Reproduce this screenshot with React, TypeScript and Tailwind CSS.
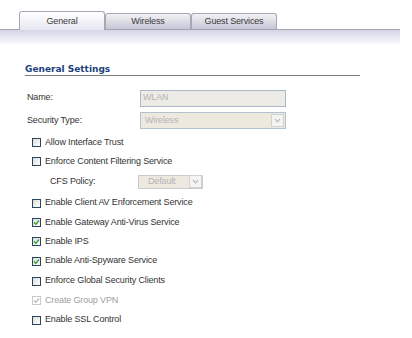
import React from "react";

const font = "font-['Liberation_Sans',Arial,sans-serif] text-[9px] tracking-[-0.15px]";

const Tab = ({ label, active }: { label: string; active?: boolean }) => (
  <div
    className={
      active
        ? "w-[86px] h-[19px] -mb-px pt-[1px] rounded-t-[3px] border border-b-0 border-[#a8a8b4] bg-gradient-to-b from-white to-[#e6e7f1] flex items-center justify-center text-[#3a3a3a]"
        : "w-[86px] h-[16px] pt-[1px] rounded-t-[3px] border border-b-0 border-[#a8a8b4] bg-gradient-to-b from-[#f2f2f4] to-[#c6c7d6] flex items-center justify-center text-[#3a3a3a]"
    }
  >
    {label}
  </div>
);

const Check = ({ checked, disabled }: { checked?: boolean; disabled?: boolean }) => (
  <div
    className={
      disabled
        ? "w-[9px] h-[9px] border border-[#c8c8c8] bg-white flex items-center justify-center"
        : "w-[9px] h-[9px] border border-[#2b4560] bg-gradient-to-br from-[#dcdcd6] to-white flex items-center justify-center"
    }
  >
    {checked && (
      <svg width="7" height="7" viewBox="0 0 7 7">
        <path
          d="M1 3.5 L2.8 5.3 L6 1.5"
          fill="none"
          stroke={disabled ? "#b8b8b8" : "#2fa02f"}
          strokeWidth="1.3"
        />
      </svg>
    )}
  </div>
);

const Arrow = () => (
  <div className="w-[13px] h-[13px] border border-[#d2d2d2] bg-[#f4f4f2] flex items-center justify-center">
    <svg width="7" height="5" viewBox="0 0 7 5">
      <path d="M1 1 L3.5 3.8 L6 1" fill="none" stroke="#b0b0b0" strokeWidth="1.1" />
    </svg>
  </div>
);

const options = [
  { label: "Allow Interface Trust", h: "h-[19px]" },
  { label: "Enforce Content Filtering Service", h: "h-[19px]" },
];

const services = [
  { label: "Enable Client AV Enforcement Service", h: "h-[20px]" },
  { label: "Enable Gateway Anti-Virus Service", h: "h-[19px]", checked: true },
  { label: "Enable IPS", h: "h-[19px]", checked: true },
  { label: "Enable Anti-Spyware Service", h: "h-[20px]", checked: true },
  { label: "Enforce Global Security Clients", h: "h-[20px]" },
  { label: "Create Group VPN", h: "h-[19px]", checked: true, disabled: true },
  { label: "Enable SSL Control", h: "h-[20px]" },
];

const CheckRow = ({
  label,
  h,
  checked,
  disabled,
}: {
  label: string;
  h: string;
  checked?: boolean;
  disabled?: boolean;
}) => (
  <div className={`${h} flex items-center pl-[32px] gap-[4px]`}>
    <Check checked={checked} disabled={disabled} />
    <span className={disabled ? "text-[#a0a0a0]" : "text-[#333]"}>{label}</span>
  </div>
);

export default function App() {
  return (
    <div className={`w-[412px] h-[338px] bg-white overflow-hidden ${font}`}>
      <div className="w-[400px] h-[30px] pl-[19px] flex items-end border-b border-[#a4a4b0]">
        <Tab label="General" active />
        <Tab label="Wireless" />
        <Tab label="Guest Services" />
      </div>
      <div className="w-[400px] h-[16px] bg-gradient-to-b from-[#d3d5e6] to-white" />

      <div className="mt-[18px] ml-[25px] w-[335px] border-b border-[#7c7c7c] font-['DejaVu_Sans',Verdana,sans-serif] font-bold text-[9px] tracking-normal leading-[11px] text-[#22417c]">
        General Settings
      </div>

      <div className="mt-[13px] h-[18px] flex items-center">
        <span className="w-[140px] pl-[27px] text-[#333]">Name:</span>
        <div className="w-[146px] h-[17px] border border-[#a9b9c9] bg-[#ecebe6] flex items-center pl-[2px] text-[#b4b4b4]">
          WLAN
        </div>
      </div>

      <div className="mt-[5px] h-[17px] flex items-center">
        <span className="w-[140px] pl-[27px] text-[#333]">Security Type:</span>
        <div className="w-[146px] h-[17px] border border-[#b4c2d0] bg-[#ede9df] flex items-center justify-between pl-[4px] pr-[1px] text-[#b4b4b4]">
          <span>Wireless</span>
          <Arrow />
        </div>
      </div>

      <div className="mt-[4px]">
        {options.map((o) => (
          <CheckRow key={o.label} {...o} />
        ))}
      </div>

      <div className="h-[21px] flex items-center">
        <span className="w-[138px] pl-[50px] text-[#333]">CFS Policy:</span>
        <div className="w-[65px] h-[14px] border border-[#c8ccd0] bg-[#ede9df] flex items-center justify-between pl-[9px] text-[#b4b4b4]">
          <span>Default</span>
          <Arrow />
        </div>
      </div>

      <div className="mt-[1px]">
        {services.map((s) => (
          <CheckRow key={s.label} {...s} />
        ))}
      </div>
    </div>
  );
}
